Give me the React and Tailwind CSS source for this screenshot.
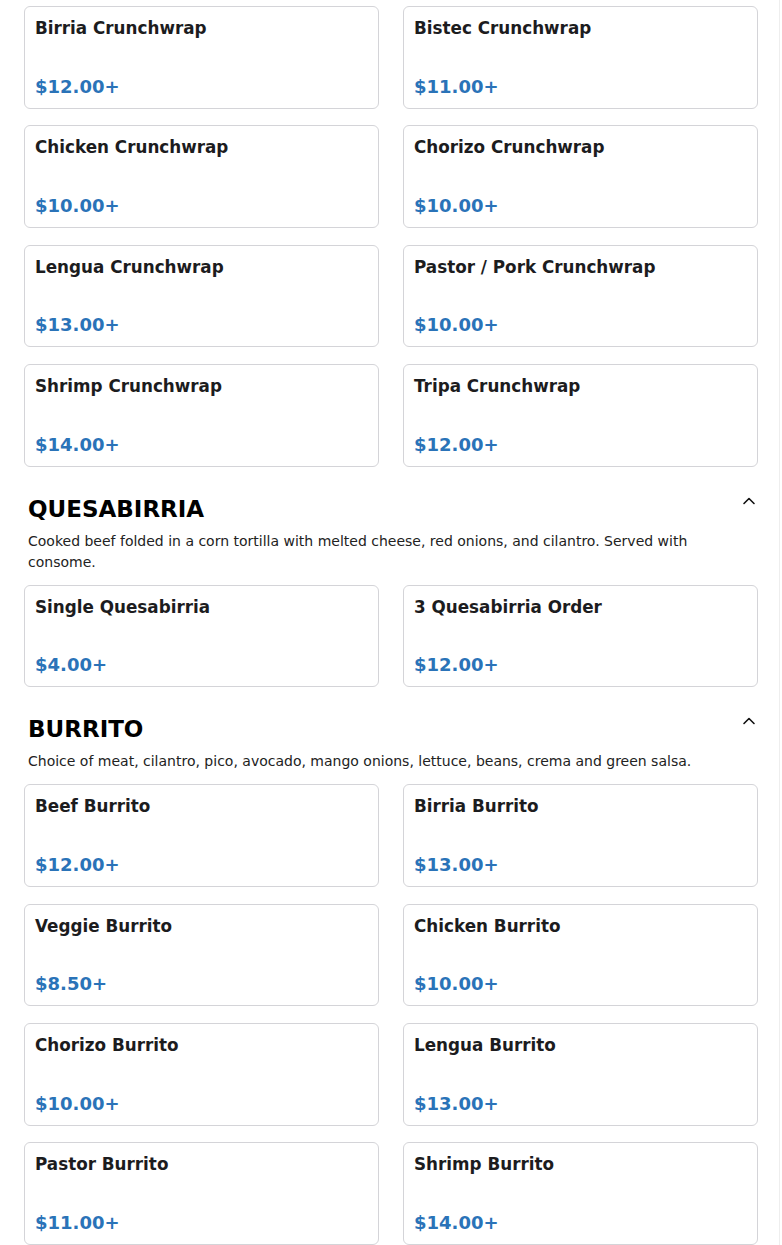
import React from "react";

const sections = [
  {
    items: [
      ["Birria Crunchwrap", "$12.00+"],
      ["Bistec Crunchwrap", "$11.00+"],
      ["Chicken Crunchwrap", "$10.00+"],
      ["Chorizo Crunchwrap", "$10.00+"],
      ["Lengua Crunchwrap", "$13.00+"],
      ["Pastor / Pork Crunchwrap", "$10.00+"],
      ["Shrimp Crunchwrap", "$14.00+"],
      ["Tripa Crunchwrap", "$12.00+"],
    ],
  },
  {
    title: "QUESABIRRIA",
    desc: "Cooked beef folded in a corn tortilla with melted cheese, red onions, and cilantro. Served with consome.",
    items: [
      ["Single Quesabirria", "$4.00+"],
      ["3 Quesabirria Order", "$12.00+"],
    ],
  },
  {
    title: "BURRITO",
    desc: "Choice of meat, cilantro, pico, avocado, mango onions, lettuce, beans, crema and green salsa.",
    items: [
      ["Beef Burrito", "$12.00+"],
      ["Birria Burrito", "$13.00+"],
      ["Veggie Burrito", "$8.50+"],
      ["Chicken Burrito", "$10.00+"],
      ["Chorizo Burrito", "$10.00+"],
      ["Lengua Burrito", "$13.00+"],
      ["Pastor Burrito", "$11.00+"],
      ["Shrimp Burrito", "$14.00+"],
    ],
  },
];

function Card({ name, price }) {
  return (
    <div className="h-[102.67px] rounded-[6px] border border-[#d4d4d8] bg-white pt-[10px] pb-[9px] px-[10px] flex flex-col justify-between">
      <div className="text-[16.8px] leading-[22px] font-bold text-[#1c1c1e]">{name}</div>
      <div className="text-[18px] leading-[24px] font-bold text-[#2a73b8]">{price}</div>
    </div>
  );
}

function Chevron() {
  return (
    <svg width="14" height="9" viewBox="0 0 14 9" className="block">
      <path d="M2 7.5 L7 2.5 L12 7.5" fill="none" stroke="#111" strokeWidth="1.6" strokeLinecap="round" strokeLinejoin="round" />
    </svg>
  );
}

export default function App() {
  return (
    <div
      className="w-[780px] min-h-[1245px] bg-white border-r border-[#eeeeee]"
      style={{ fontFamily: '"DejaVu Sans", sans-serif' }}
    >
      <div className="pt-[6px] pl-6 pr-[21px]">
        {sections.map((s, i) => (
          <div key={i} className={i > 0 ? "mt-[28px]" : ""}>
            {s.title && (
              <div className="px-1 mb-[12px]">
                <div className="flex items-start justify-between">
                  <h2 className="text-[23px] leading-[28px] font-bold text-black">{s.title}</h2>
                  <div className="-mr-[2px] pt-[1px]">
                    <Chevron />
                  </div>
                </div>
                <p className="mt-[8px] text-[14px] leading-[21px] text-[#222]">{s.desc}</p>
              </div>
            )}
            <div className="grid grid-cols-2 gap-x-6 gap-y-[16.67px]">
              {s.items.map(([n, p]) => (
                <Card key={n} name={n} price={p} />
              ))}
            </div>
          </div>
        ))}
      </div>
    </div>
  );
}
